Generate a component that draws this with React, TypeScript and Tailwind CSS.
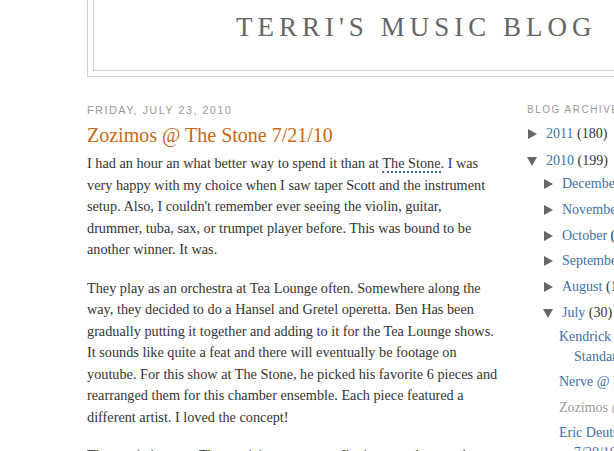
import React from 'react';

const serif = { fontFamily: '"Liberation Serif", "DejaVu Serif", serif' };
const sans = { fontFamily: '"Liberation Sans", Arial, sans-serif' };

const months = ['December (17)', 'November (19)', 'October (21)', 'September (18)', 'August (16)'];

const Tri = ({ open }: { open?: boolean }) => (
  <span className="inline-flex w-[10px] mr-[9px] shrink-0 self-center">
    <svg width="10" height="10" viewBox="0 0 10 10" fill="#666">
      {open ? <path d="M0 1 L10 1 L5 10 Z" /> : <path d="M1 0 L10 5 L1 10 Z" />}
    </svg>
  </span>
);

export default function App() {
  return (
    <div className="w-[614px] h-[451px] overflow-hidden bg-white" style={serif}>
      <div className="pl-[87px] w-[1000px]">
        {/* header */}
        <div className="border-l border-r border-b border-[#cfcfcf] pl-[5px] pb-[5px]">
          <div className="border-l border-b border-[#cfcfcf] h-[71px]">
            <h1 className="pl-[142px] pt-[11px] text-[27px] leading-[32px] tracking-[5px] text-[#666]" style={serif}>
              TERRI'S MUSIC BLOG
            </h1>
          </div>
        </div>

        <div className="flex mt-[26px]">
          {/* main */}
          <div className="w-[440px]">
            <div className="text-[11px] leading-[14px] tracking-[1.4px] text-[#999]" style={sans}>
              FRIDAY, JULY 23, 2010
            </div>
            <h2 className="mt-[6px] text-[20px] leading-[24px] text-[#cc6611]">Zozimos @ The Stone 7/21/10</h2>
            <div className="mt-[6px] text-[14.25px] leading-[21.5px] text-[#333]">
              <p>
                I had an hour an what better way to spend it than at{' '}
                <span className="border-b-2 border-dotted border-[#3d6fa8]">The Stone</span>. I was<br />
                very happy with my choice when I saw taper Scott and the instrument<br />
                setup. Also, I couldn't remember ever seeing the violin, guitar,<br />
                drummer, tuba, sax, or trumpet player before. This was bound to be<br />
                another winner. It was.
              </p>
              <p className="mt-[17px]">
                They play as an orchestra at Tea Lounge often. Somewhere along the<br />
                way, they decided to do a Hansel and Gretel operetta. Ben Has been<br />
                gradually putting it together and adding to it for the Tea Lounge shows.<br />
                It sounds like quite a feat and there will eventually be footage on<br />
                youtube. For this show at The Stone, he picked his favorite 6 pieces and<br />
                rearranged them for this chamber ensemble. Each piece featured a<br />
                different artist. I loved the concept!
              </p>
              <p className="mt-[17px]">
                The music is great. The musicians are great. I'm interested to see the
              </p>
            </div>
          </div>

          {/* sidebar */}
          <div className="w-[200px]">
            <div className="text-[10px] leading-[14px] tracking-[1.5px] text-[#999] whitespace-nowrap" style={sans}>
              BLOG ARCHIVE
            </div>
            <ul className="mt-[4px] text-[14px] leading-[20px] text-[#333]">
              <li className="py-[3px] flex items-baseline">
                <Tri />
                <span className="text-[#3d6fa8]">2011</span>&nbsp;(180)
              </li>
              <li className="pt-[4px]">
                <div className="flex items-baseline">
                  <Tri open />
                  <span className="text-[#3d6fa8]">2010</span>&nbsp;(199)
                </div>
                <ul className="pl-[16px]">
                  {months.map((m, i) => {
                    const [name, count] = m.split(' ');
                    return (
                      <li
                        key={m}
                        className={`${i === 0 ? 'pt-[3px]' : 'pt-[5.8px]'} flex items-baseline whitespace-nowrap`}
                      >
                        <Tri />
                        <span className="text-[#3d6fa8]">{name}</span>&nbsp;{count}
                      </li>
                    );
                  })}
                  <li className="pt-[5.8px]">
                    <div className="flex items-baseline">
                      <Tri open />
                      <span className="text-[#3d6fa8]">July</span>&nbsp;(30)
                    </div>
                    <ul className="pl-[16px] text-[#3d6fa8]">
                      <li className="pt-[4px] pl-[15px] -indent-[15px]">Kendrick Scott @ Jazz Standard 7/31/10</li>
                      <li className="pt-[5px]">Nerve @ Le Poisson Rouge</li>
                      <li className="pt-[6px] text-[#999]">Zozimos @ The Stone</li>
                      <li className="pt-[5px] pl-[15px] -indent-[15px]">Eric Deutsch @ Rockwood 7/20/10</li>
                    </ul>
                  </li>
                </ul>
              </li>
            </ul>
          </div>
        </div>
      </div>
    </div>
  );
}
